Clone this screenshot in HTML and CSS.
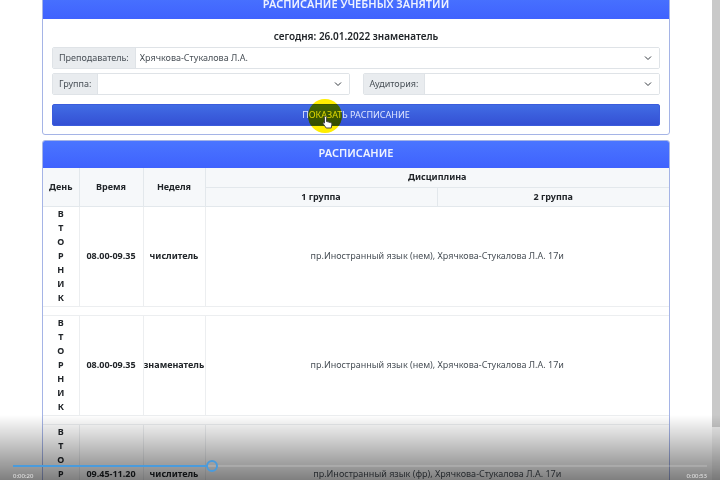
FILE: index.html
```
<!DOCTYPE html>
<html lang="ru">
<head>
    <meta charset="UTF-8">
    <meta name="viewport" content="width=device-width, initial-scale=1.0">
    <title>Расписание учебных занятий</title>
    <link rel="stylesheet" href="styles.css">
</head>
<body>
    <div class="screen">
        <main class="page">
            <section class="card">
                <h1 class="card-header">РАСПИСАНИЕ УЧЕБНЫХ ЗАНЯТИЙ</h1>
                <form class="card-body">
                    <h2 class="today">сегодня: 26.01.2022 знаменатель</h2>
                    <div class="input-group">
                        <label for="teacher">Преподаватель:</label>
                        <div class="select-wrap">
                            <select id="teacher"><option>Хрячкова-Стукалова Л.А.</option></select>
                            <svg class="chevron" viewBox="0 0 16 16"><path d="M2 5l6 6 6-6"/></svg>
                        </div>
                    </div>
                    <div class="form-row">
                        <div class="input-group">
                            <label for="group">Группа:</label>
                            <div class="select-wrap">
                                <select id="group"><option></option></select>
                                <svg class="chevron" viewBox="0 0 16 16"><path d="M2 5l6 6 6-6"/></svg>
                            </div>
                        </div>
                        <div class="input-group">
                            <label for="room">Аудитория:</label>
                            <div class="select-wrap">
                                <select id="room"><option></option></select>
                                <svg class="chevron" viewBox="0 0 16 16"><path d="M2 5l6 6 6-6"/></svg>
                            </div>
                        </div>
                    </div>
                    <button type="button" class="btn">ПОКАЗАТЬ РАСПИСАНИЕ</button>
                </form>
            </section>

            <section class="card">
                <h2 class="card-header">РАСПИСАНИЕ</h2>
                <table class="schedule">
                    <colgroup>
                        <col class="col-day">
                        <col class="col-time">
                        <col class="col-week">
                        <col>
                        <col>
                    </colgroup>
                    <thead>
                        <tr>
                            <th rowspan="2">День</th>
                            <th rowspan="2">Время</th>
                            <th rowspan="2">Неделя</th>
                            <th colspan="2">Дисциплина</th>
                        </tr>
                        <tr>
                            <th>1 группа</th>
                            <th>2 группа</th>
                        </tr>
                    </thead>
                    <tbody>
                        <tr>
                            <th class="day">В<br>Т<br>О<br>Р<br>Н<br>И<br>К</th>
                            <th>08.00-09.35</th>
                            <th>числитель</th>
                            <td colspan="2">пр.Иностранный язык (нем), Хрячкова-Стукалова Л.А. 17и</td>
                        </tr>
                        <tr class="gap"><td colspan="5"></td></tr>
                        <tr>
                            <th class="day">В<br>Т<br>О<br>Р<br>Н<br>И<br>К</th>
                            <th>08.00-09.35</th>
                            <th>знаменатель</th>
                            <td colspan="2">пр.Иностранный язык (нем), Хрячкова-Стукалова Л.А. 17и</td>
                        </tr>
                        <tr class="gap"><td colspan="5"></td></tr>
                        <tr>
                            <th class="day">В<br>Т<br>О<br>Р<br>Н<br>И<br>К</th>
                            <th>09.45-11.20</th>
                            <th>числитель</th>
                            <td colspan="2">пр.Иностранный язык (фр), Хрячкова-Стукалова Л.А. 17и</td>
                        </tr>
                    </tbody>
                </table>
            </section>
        </main>
        <div class="scrollbar"><div class="thumb"></div></div>
    </div>

    <!-- mouse pointer with highlight -->
    <div class="highlight"></div>
    <svg class="pointer" viewBox="0 0 34 34">
        <path d="M16.500 18.500c0-1.600 2-1.600 2 0v4l1.500.3 2.500.8c1.200.4 1.500 1 1.300 2.200l-.6 3.200h-5l-3-4.200c-.6-1 .5-1.700 1.300-.8z"/>
    </svg>

    <div class="player">
        <input type="range" class="seek" aria-label="Позиция видео" min="0" max="1000" value="283">
        <div class="times">
            <span>0:00:20</span>
            <span>0:00:53</span>
        </div>
    </div>
</body>
</html>
```
FILE: styles.css
```
* {
    box-sizing: border-box;
}
body {
    margin: 0;
    background: #fff;
    color: #212529;
    font-family: "Noto Sans", "Open Sans", sans-serif;
    font-size: 9px;
    line-height: 14px;
}
.screen {
    display: flex;
    height: 100vh;
    overflow: hidden;
}

/* the page is scrolled down a little */
.page {
    flex: 1;
    margin-top: -9px;
    padding: 0 42px;
}
.card {
    margin-bottom: 5px;
    border: 1px solid #a5b4e6;
    border-radius: 3px;
    overflow: hidden;
}
.card-header {
    margin: 0;
    padding-bottom: 3px;
    background: linear-gradient(#4a75ff, #3f62fe);
    color: #eef2ff;
    font-size: 11px;
    font-weight: 600;
    line-height: 24px;
    text-align: center;
}
.card-body {
    display: flex;
    flex-direction: column;
    gap: 4px;
    padding: 10px 9px 8px;
}
.today {
    margin: 0;
    font-size: 10px;
    font-weight: 600;
    line-height: 14px;
    text-align: center;
}
.form-row {
    display: grid;
    grid-template-columns: 1fr 1fr;
    gap: 13px;
}
.input-group {
    display: flex;
    height: 22px;
    border: 1px solid #dfe3e7;
    border-radius: 2px;
    overflow: hidden;
}
.input-group label {
    padding: 0 6px;
    background: #e9ecef;
    border-right: 1px solid #dfe3e7;
    color: #495057;
    line-height: 20px;
}
.select-wrap {
    position: relative;
    flex: 1;
}
.select-wrap select {
    display: block;
    width: 100%;
    height: 100%;
    padding: 0 4px;
    border: 0;
    background: #fff;
    color: #495057;
    font: inherit;
    appearance: none;
}
.chevron {
    position: absolute;
    top: 6px;
    right: 7px;
    width: 8px;
    height: 8px;
    fill: none;
    stroke: #343a40;
    stroke-width: 2;
    pointer-events: none;
}
.btn {
    height: 22px;
    margin-top: 5px;
    border: 1px solid #3b5cdc;
    border-radius: 2px;
    background: linear-gradient(#416ce4, #3450d4);
    color: #dfe6ff;
    font: inherit;
    cursor: pointer;
}

.schedule {
    width: 100%;
    border-collapse: collapse;
    table-layout: fixed;
    text-align: center;
}
.col-day {
    width: 36px;
}
.col-time {
    width: 64px;
}
.col-week {
    width: 62px;
}
.schedule th,
.schedule td {
    padding: 0;
    border: 1px solid #eceef0;
}
.schedule td {
    color: #495057;
}
.schedule thead th {
    height: 19px;
    background: #f6f8fa;
    border-color: #e3e8ec;
}
.schedule thead tr:first-child th {
    border-top: 0;
}
.schedule tr:first-child th:first-child,
.schedule .day,
.schedule .gap td {
    border-left: 0;
}
.schedule td,
.schedule thead th:last-child {
    border-right: 0;
}
.schedule .day {
    height: 100px;
}
.schedule .gap td {
    height: 9px;
}

.scrollbar {
    width: 8px;
    background: #f1f1f1;
}
.thumb {
    height: 89%;
    background: #c9c9c9;
}

.highlight,
.pointer {
    position: absolute;
    top: 99px;
    left: 308px;
    width: 34px;
    height: 34px;
    pointer-events: none;
}
.highlight {
    border-radius: 50%;
    background: #ffee00;
    mix-blend-mode: multiply;
}
.pointer path {
    fill: #fff;
    stroke: #444;
    stroke-width: 1;
}

/* video controls over the page */
.player {
    position: fixed;
    right: 0;
    bottom: 0;
    left: 0;
    height: 65px;
    padding: 45px 13px 0;
    background: linear-gradient(rgba(0, 0, 0, 0), rgba(0, 0, 0, 0.5));
}
.seek {
    display: block;
    width: 100%;
    height: 12px;
    margin: 0;
    background: none;
    appearance: none;
}
.seek::-webkit-slider-runnable-track {
    height: 2px;
    background: linear-gradient(to right, #4a9bdc 28%, rgba(255, 255, 255, 0.15) 28%);
}
.seek::-webkit-slider-thumb {
    width: 12px;
    height: 12px;
    margin-top: -5px;
    border: 2px solid #4a9bdc;
    border-radius: 50%;
    background: transparent;
    appearance: none;
}
.times {
    display: flex;
    justify-content: space-between;
    color: #e6e6e6;
    font-size: 6px;
    line-height: 8px;
}
```
